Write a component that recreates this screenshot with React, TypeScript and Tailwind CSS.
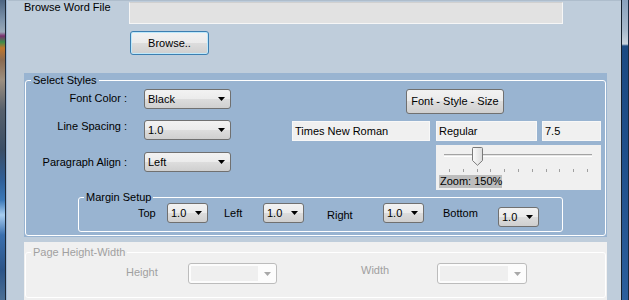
import React from "react";

function Arrow({ color = "#000000" }: { color?: string }) {
  return (
    <svg width="7" height="4" viewBox="0 0 7 4" className="shrink-0">
      <path d="M0 0H7L3.5 4Z" fill={color} />
    </svg>
  );
}

function Combo({ value, w, mt = "" }: { value: string; w: string; mt?: string }) {
  return (
    <div
      className={`flex items-center h-[20px] shrink-0 rounded-[3px] border border-[#707070] bg-[linear-gradient(to_bottom,#f2f2f2_0%,#ebebeb_50%,#dddddd_50%,#cfcfcf_100%)] pl-[3px] pr-[5px] ${w} ${mt}`}
    >
      <span className="flex-1 leading-[13px] whitespace-nowrap">{value}</span>
      <Arrow />
    </div>
  );
}

function DisabledCombo({ w }: { w: string }) {
  return (
    <div className={`flex items-center h-[21px] mt-[4px] shrink-0 rounded-[3px] border border-[#bcbcbc] bg-[#fcfcfc] p-[2px] pr-[5px] ${w}`}>
      <div className="flex-1 h-full bg-[#efefef]" />
      <div className="ml-[6px]">
        <Arrow color="#a8a8a8" />
      </div>
    </div>
  );
}

function TextBox({ value, w }: { value: string; w: string }) {
  return (
    <div className={`flex items-center h-[20px] shrink-0 border border-[#f8f8f8] bg-[#f0f0f0] pl-[2px] ${w}`}>
      <span className="whitespace-nowrap">{value}</span>
    </div>
  );
}

function Slider() {
  const ticks = Array.from({ length: 11 }, (_, i) => i);
  return (
    <div className="relative flex flex-col ml-[144px] mt-[4px] w-[165px] h-[45px] bg-[#f0f0f0]">
      <div className="ml-[8px] mt-[9px] w-[148px] h-[3px] border-t border-[#a3a3a3] border-b border-b-white bg-[#e6e6e6]" />
      <div className="ml-[13px] mt-[12px] w-[139px] h-[3px] flex justify-between">
        {ticks.map((t) => (
          <div key={t} className="w-px h-[3px] bg-[#a0a0a0]" />
        ))}
      </div>
      <div className="ml-[3px] mt-[3px] w-[63px] h-[13px] bg-[#bdbdbd] pl-[1px] leading-[13px] whitespace-nowrap">
        Zoom: 150%
      </div>
      <svg width="11" height="19" viewBox="0 0 11 19" className="absolute left-[36px] top-[2px]">
        <defs>
          <linearGradient id="thumbg" x1="0" y1="0" x2="1" y2="0">
            <stop offset="0" stopColor="#fbfbfb" />
            <stop offset="1" stopColor="#dcdcdc" />
          </linearGradient>
        </defs>
        <path d="M1 0.5H9.5Q10.5 0.5 10.5 1.5V13.5L5.5 18.3L0.5 13.5V1.5Q0.5 0.5 1 0.5Z" fill="url(#thumbg)" stroke="#7a7a7a" />
      </svg>
    </div>
  );
}

export default function App() {
  return (
    <div className="flex w-[629px] h-[300px] overflow-hidden bg-[#bfcddb] font-['Liberation_Sans',Arial,sans-serif] text-[11px] leading-[13px] text-black">
      {/* left window edge */}
      <div className="flex shrink-0">
        <div className="w-[5px] bg-[linear-gradient(to_bottom,#4d6582_0px,#7d93ab_20px,#9aa9b8_32px,#7a2d6e_36px,#3c8d4a_42px,#c0762c_48px,#8a6a50_60px,#9c8f80_80px,#56606c_110px,#3a4e66_150px,#2f5f98_180px,#3a78b8_200px,#a7cdf0_215px,#3a6fae_235px,#2b5488_270px,#4b6f95_300px)]" />
        <div className="w-px bg-[#1d2836]" />
        <div className="w-[2px] bg-[linear-gradient(to_right,#8eaacb,#c9d8e8)]" />
      </div>

      {/* main form */}
      <div className="flex flex-col w-[613px] shrink-0 pl-[16px] border-t border-[#aebdcc]">
        {/* browse row */}
        <div className="flex items-start">
          <div className="w-[105px] shrink-0 leading-[13px] whitespace-nowrap">Browse Word File</div>
          <div className="mt-[1px] w-[434px] h-[22px] border border-[#f6f6f6] border-t-[#d0d0d0] bg-[#e2e2e2]" />
        </div>
        <div className="flex">
          <button className="ml-[106px] mt-[7px] w-[79px] h-[24px] rounded-[3px] border border-[#3c7fb1] shadow-[inset_0_0_0_1px_#bde8fb] bg-[linear-gradient(to_bottom,#f2f2f2_0%,#ebebeb_50%,#dddddd_50%,#cfcfcf_100%)] text-[11px] leading-[13px] text-black">
            Browse..
          </button>
        </div>

        {/* Select Styles panel */}
        <div className="mt-[18px] w-[583px] bg-[#99b4d1] px-px pb-px flex flex-col">
          <fieldset className="border border-white rounded-[3px] pb-[3px]">
            <legend className="ml-[5px] px-[2px] leading-[14px]">Select Styles</legend>
            <div className="flex h-[104px]">
              {/* left column */}
              <div className="flex flex-col">
                <div className="flex items-start mt-[2px]">
                  <div className="w-[101px] text-right mt-[3px] whitespace-nowrap">Font Color :</div>
                  <div className="ml-[17px]">
                    <Combo value="Black" w="w-[87px]" />
                  </div>
                </div>
                <div className="flex items-start mt-[11px]">
                  <div className="w-[101px] text-right mt-0 whitespace-nowrap">Line Spacing :</div>
                  <div className="ml-[17px]">
                    <Combo value="1.0" w="w-[87px]" />
                  </div>
                </div>
                <div className="flex items-start mt-[12px]">
                  <div className="w-[101px] text-right mt-[4px] whitespace-nowrap">Paragraph Align :</div>
                  <div className="ml-[17px]">
                    <Combo value="Left" w="w-[87px]" />
                  </div>
                </div>
              </div>
              {/* right column */}
              <div className="flex flex-col ml-[61px] w-[309px]">
                <button className="ml-[114px] mt-[2px] w-[98px] h-[25px] rounded-[3px] border border-[#707070] bg-[linear-gradient(to_bottom,#f2f2f2_0%,#ebebeb_50%,#dddddd_50%,#cfcfcf_100%)] text-[11px] leading-[13px] text-black whitespace-nowrap">
                  Font - Style - Size
                </button>
                <div className="flex mt-[7px]">
                  <TextBox value="Times New Roman" w="w-[138px]" />
                  <div className="ml-[6px]">
                    <TextBox value="Regular" w="w-[101px]" />
                  </div>
                  <div className="ml-[5px]">
                    <TextBox value="7.5" w="w-[59px]" />
                  </div>
                </div>
                <Slider />
              </div>
            </div>

            {/* Margin Setup */}
            <fieldset className="ml-[52px] w-[485px] border border-white rounded-[3px]">
              <legend className="ml-[5px] px-[2px] leading-[12px]">Margin Setup</legend>
              <div className="flex items-start h-[28px]">
                <div className="ml-[59px] w-[29px] mt-[4px] shrink-0">Top</div>
                <Combo value="1.0" w="w-[41px]" />
                <div className="ml-[16px] w-[39px] mt-[4px] shrink-0">Left</div>
                <Combo value="1.0" w="w-[41px]" />
                <div className="ml-[23px] w-[56px] mt-[6px] shrink-0">Right</div>
                <Combo value="1.0" w="w-[41px]" />
                <div className="ml-[19px] w-[55px] mt-[4px] shrink-0">Bottom</div>
                <Combo value="1.0" w="w-[41px]" mt="mt-[4px]" />
              </div>
            </fieldset>
          </fieldset>
        </div>

        {/* Page Height-Width panel (disabled) */}
        <div className="mt-[5px] w-[583px] bg-[#f0f0f0] px-px pt-[3px] pb-[2px] flex flex-col">
          <fieldset className="border border-white rounded-[3px]">
            <legend className="ml-[5px] px-[2px] leading-[14px] text-[#a0a0a0]">Page Height-Width</legend>
            <div className="flex items-start h-[38px] text-[#a0a0a0]">
              <div className="ml-[100px] w-[62px] mt-[7px] shrink-0">Height</div>
              <DisabledCombo w="w-[89px]" />
              <div className="ml-[84px] w-[76px] mt-[5px] shrink-0">Width</div>
              <DisabledCombo w="w-[90px]" />
            </div>
          </fieldset>
        </div>
      </div>

      {/* right window edge */}
      <div className="flex w-[8px] shrink-0">
        <div className="w-px bg-[#16202c]" />
        <div className="flex-1 bg-[linear-gradient(to_bottom,#8aa1bc_0px,#a8b9cc_30px,#c9d4df_44px,#1c4a82_46px,#1f4f8a_150px,#2d5f9c_300px)]" />
        <div className="w-px bg-[#1a2a3e]" />
      </div>
    </div>
  );
}
